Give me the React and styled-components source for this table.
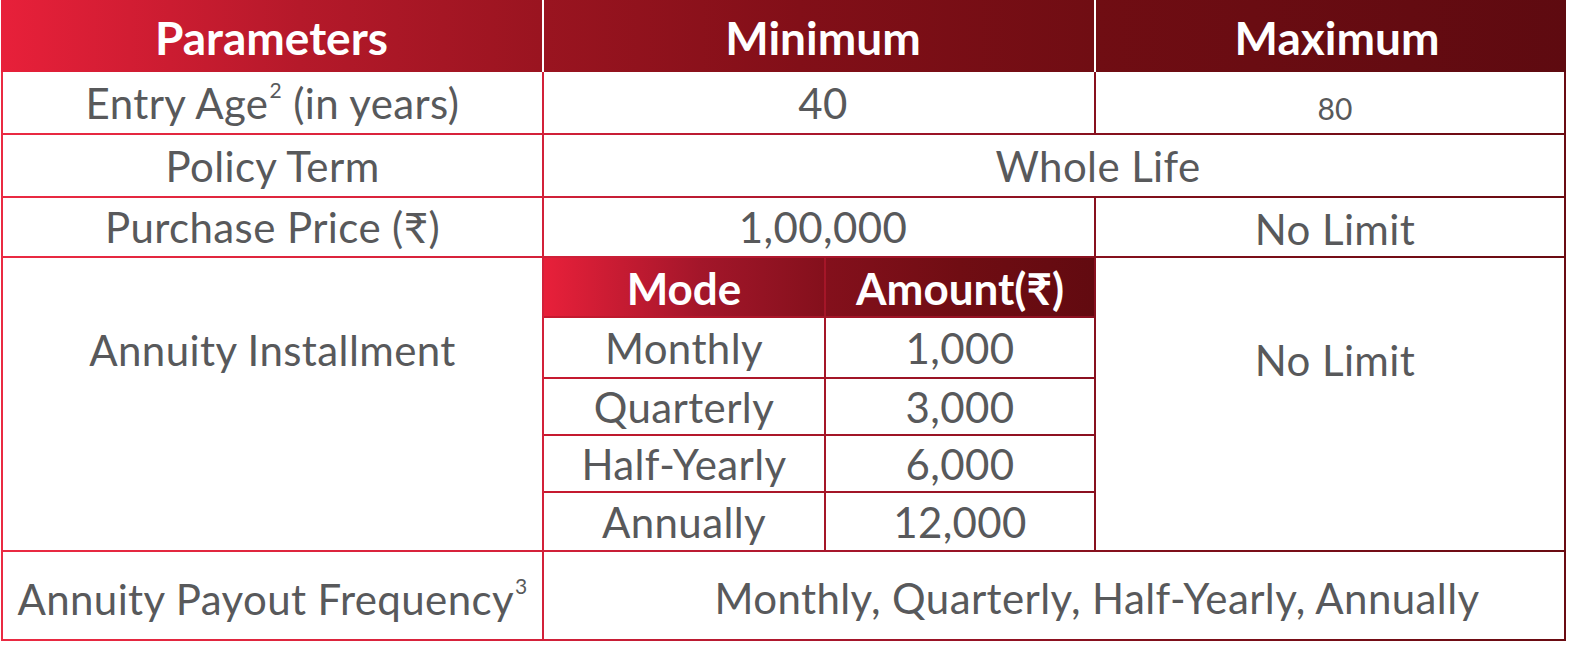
import React from 'react';
import styled, { createGlobalStyle } from 'styled-components';

const GlobalStyle = createGlobalStyle`
  html, body {
    margin: 0;
    padding: 0;
    background: #ffffff;
  }
  body {
    font-family: Lato, "Noto Sans", "DejaVu Sans", sans-serif;
  }
`;

const Wrapper = styled.div`
  width: 1565px;
  margin-left: 1px;
  display: flex;
  flex-direction: column;
`;

/* the header row shares one gradient across all three cells */
const HeaderRow = styled.div`
  display: grid;
  grid-template-columns: 541px 550px 470px;
  column-gap: 2px;
  height: 72px;
  background: #ffffff;
`;

const HeadCell = styled.div`
  display: flex;
  align-items: center;
  justify-content: center;
  padding-left: ${(p) => p.$shift || 0}px;
  padding-top: 2px;
  color: #ffffff;
  font-weight: 700;
  font-size: ${(p) => p.$size || 46}px;
  background: linear-gradient(
    90deg,
    #e8203a 0px,
    #b5192a 300px,
    #9a1420 540px,
    #820f18 800px,
    #700d13 1095px,
    #5e0a10 1570px
  );
  background-attachment: fixed;
`;

const Body = styled.div`
  display: grid;
  grid-template-columns: 539px 550px 468px;
  grid-template-rows: 61px 61px 58px 292px 87px;
  gap: 2px;
  padding: 0 2px 2px 2px;
  background: linear-gradient(
    90deg,
    #ea2a42 0%,
    #d4213a 34%,
    #a3152a 55%,
    #7e0f1a 75%,
    #6a0b12 100%
  );
`;

const Cell = styled.div`
  display: flex;
  align-items: center;
  justify-content: center;
  background: #ffffff;
  color: #58595b;
  font-size: ${(p) => p.$size || 42}px;
  letter-spacing: ${(p) => (p.$size ? 0 : 0.4)}px;
  white-space: nowrap;
  padding-top: ${(p) => p.$pt || 0}px;
  padding-bottom: ${(p) => p.$pb || 0}px;
  padding-left: ${(p) => p.$pl || 0}px;
  grid-column: ${(p) => p.$span || 'auto'};
`;

const Sup = styled.span`
  position: relative;
  top: -0.62em;
  font-size: 0.5em;
  margin-left: 1px;
`;

const NestedCell = styled.div`
  display: grid;
  grid-template-columns: 280px 268px;
  grid-template-rows: 58px 59px 55px 55px 57px;
  gap: 2px;
  background: linear-gradient(90deg, #c81a30 0%, #a51628 50%, #8a1020 100%);
`;

const NestedHead = styled.div`
  display: flex;
  align-items: center;
  justify-content: center;
  padding-top: 2px;
  color: #ffffff;
  font-weight: 700;
  font-size: 44px;
  background: linear-gradient(
    90deg,
    #e8203a 544px,
    #a3162a 700px,
    #84101c 825px,
    #700d13 960px,
    #620a10 1094px
  );
  background-attachment: fixed;
`;

const NestedCellText = styled.div`
  display: flex;
  align-items: center;
  justify-content: center;
  background: #ffffff;
  color: #58595b;
  font-size: 42px;
  letter-spacing: 0.4px;
  white-space: nowrap;
`;

const installments = [
  ['Monthly', '1,000'],
  ['Quarterly', '3,000'],
  ['Half-Yearly', '6,000'],
  ['Annually', '12,000'],
];

export default function App() {
  return (
    <>
      <GlobalStyle />
      <Wrapper>
        <HeaderRow>
          <HeadCell>Parameters</HeadCell>
          <HeadCell $shift={8}>Minimum</HeadCell>
          <HeadCell $shift={12}>Maximum</HeadCell>
        </HeaderRow>

        <Body>
          <Cell>
            Entry Age<Sup>2</Sup>&nbsp;(in years)
          </Cell>
          <Cell $pl={8}>40</Cell>
          <Cell $size={30} $pt={10} $pl={10}>80</Cell>

          <Cell>Policy Term</Cell>
          <Cell $span="2 / 4" $pl={88}>Whole Life</Cell>

          <Cell>Purchase Price (₹)</Cell>
          <Cell $pl={8}>1,00,000</Cell>
          <Cell $pt={4} $pl={10}>No Limit</Cell>

          <Cell $pb={108}>Annuity Installment</Cell>
          <NestedCell>
            <NestedHead>Mode</NestedHead>
            <NestedHead>Amount(₹)</NestedHead>
            {installments.map(([mode, amount]) => (
              <React.Fragment key={mode}>
                <NestedCellText>{mode}</NestedCellText>
                <NestedCellText>{amount}</NestedCellText>
              </React.Fragment>
            ))}
          </NestedCell>
          <Cell $pb={88} $pl={10}>No Limit</Cell>

          <Cell $pt={6}>
            Annuity Payout Frequency<Sup>3</Sup>
          </Cell>
          <Cell $span="2 / 4" $pt={4} $pl={86}>
            Monthly, Quarterly, Half-Yearly, Annually
          </Cell>
        </Body>
      </Wrapper>
    </>
  );
}
